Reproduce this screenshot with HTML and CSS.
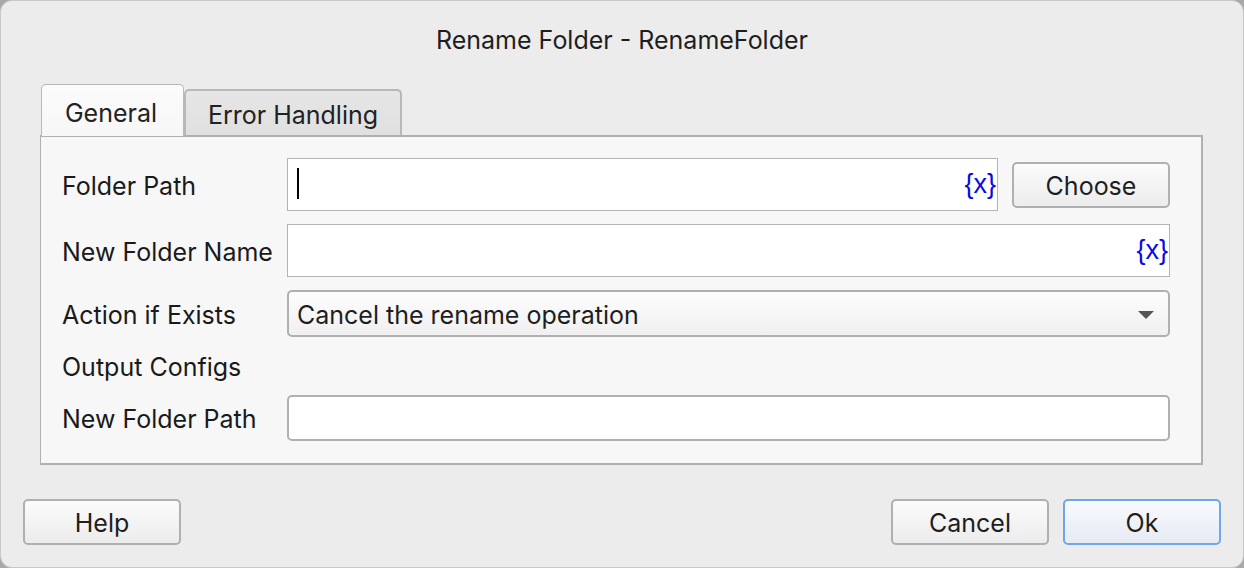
FILE: index.html
```html
<!DOCTYPE html>
<html>
<head>
<meta charset="utf-8">
<link rel="stylesheet" href="styles.css">
</head>
<body>
<div class="window">
  <div class="title">Rename Folder - RenameFolder</div>
  <div class="tabs">
    <div class="tab active">General</div>
    <div class="tab">Error Handling</div>
  </div>
  <div class="panel">
    <div class="label">Folder Path</div>
    <div class="row-with-btn">
      <div class="input tall grow"><span class="caret"></span><span class="var">{x}</span></div>
      <div class="btn choose">Choose</div>
    </div>
    <div class="label">New Folder Name</div>
    <div class="input tall"><span class="var">{x}</span></div>
    <div class="label">Action if Exists</div>
    <div class="select"><span>Cancel the rename operation</span><span class="arrow"></span></div>
    <div class="label section">Output Configs</div>
    <div></div>
    <div class="label">New Folder Path</div>
    <div class="input short"></div>
  </div>
  <div class="footer">
    <div class="btn">Help</div>
    <div class="spacer"></div>
    <div class="btn">Cancel</div>
    <div class="btn ok">Ok</div>
  </div>
</div>
</body>
</html>
```
FILE: styles.css
```css
html, body {
  margin: 0;
  padding: 0;
  background: #a8a8a8;
}
body {
  width: 1244px;
  height: 568px;
  overflow: hidden;
  font-family: Inter, "Noto Sans", "Liberation Sans", sans-serif;
  color: #1a1a1a;
}
.window {
  width: 1244px;
  height: 568px;
  box-sizing: border-box;
  background: #ececec;
  border-radius: 12px;
  border: 1px solid #c8c8c8;
  display: flex;
  flex-direction: column;
}
.title {
  height: 66px;
  padding-top: 24px;
  box-sizing: border-box;
  text-align: center;
  font-size: 25px;
  line-height: 30px;
  color: #1e1e1e;
}
.tabs {
  display: flex;
  align-items: flex-end;
  margin-left: 40px;
  height: 68px;
  box-sizing: border-box;
  padding-top: 17px;
}
.tab {
  box-sizing: border-box;
  height: 46px;
  width: 218px;
  border: 2px solid #b8b8b8;
  border-bottom: none;
  border-radius: 5px 5px 0 0;
  background: linear-gradient(#e6e6e6, #e0e0e0);
  font-size: 25px;
  line-height: 48px;
  text-align: center;
  color: #222;
}
.tab.active {
  width: 143px;
  background: linear-gradient(#fbfbfb, #f7f7f7);
  border: 1px solid #b8b8b8;
  border-bottom: none;
  line-height: 56px;
  padding-right: 3px;
  position: relative;
  z-index: 1;
  margin-bottom: -1px;
  height: 52px;
}
.panel {
  margin-left: 39px;
  width: 1163px;
  height: 330px;
  box-sizing: border-box;
  background: #f7f7f7;
  border: 1px solid #b0b0b0;
  border-top: 2px solid #b0b0b0;
  border-right: 2px solid #b0b0b0;
  border-bottom: 2px solid #b0b0b0;
  padding: 21px 31px 0 21px;
  display: grid;
  grid-template-columns: 225px 1fr;
  grid-template-rows: 53px 53px 47px 32px 46px;
  row-gap: 13px;
  align-items: center;
}
.label {
  font-size: 25px;
  color: #1a1a1a;
  padding-top: 2px;
}
.label.section {
  align-self: center;
}
.row-with-btn {
  display: flex;
  align-items: center;
  gap: 14px;
  height: 53px;
}
.input {
  box-sizing: border-box;
  background: #fff;
  border: 1px solid #b4b4b4;
  display: flex;
  align-items: center;
  position: relative;
}
.input.tall { height: 53px; }
.input.grow { flex: 1; }
.input.short {
  height: 46px;
  border: 2px solid #b0b0b0;
  border-radius: 5px;
}
.caret {
  position: absolute;
  left: 9px;
  top: 9px;
  width: 2px;
  height: 31px;
  background: #000;
}
.var {
  margin-left: auto;
  margin-right: 1px;
  font-size: 27px;
  color: #0a0ae6;
  font-family: "Liberation Sans", Arial, sans-serif;
}
.btn {
  box-sizing: border-box;
  width: 158px;
  height: 46px;
  border: 2px solid #b0b0b0;
  border-radius: 5px;
  background: linear-gradient(#fbfbfb, #ececec);
  font-size: 25px;
  line-height: 44px;
  text-align: center;
  color: #1e1e1e;
}
.select {
  box-sizing: border-box;
  height: 47px;
  border: 2px solid #b0b0b0;
  border-radius: 5px;
  background: linear-gradient(#fdfdfd, #f0f0f0);
  display: flex;
  align-items: center;
  padding: 2px 20px 0 8px;
  font-size: 25px;
  color: #1e1e1e;
}
.arrow {
  margin-left: auto;
  width: 0;
  height: 0;
  border-left: 8px solid transparent;
  border-right: 8px solid transparent;
  border-top: 8px solid #555;
  margin-right: -6px;
}
.footer {
  display: flex;
  gap: 14px;
  padding: 34px 22px 0 22px;
}
.spacer { flex: 1; }
.ok {
  border-color: #6ea6ea;
  background: linear-gradient(#f8fafd, #e6ebf3);
}
```
